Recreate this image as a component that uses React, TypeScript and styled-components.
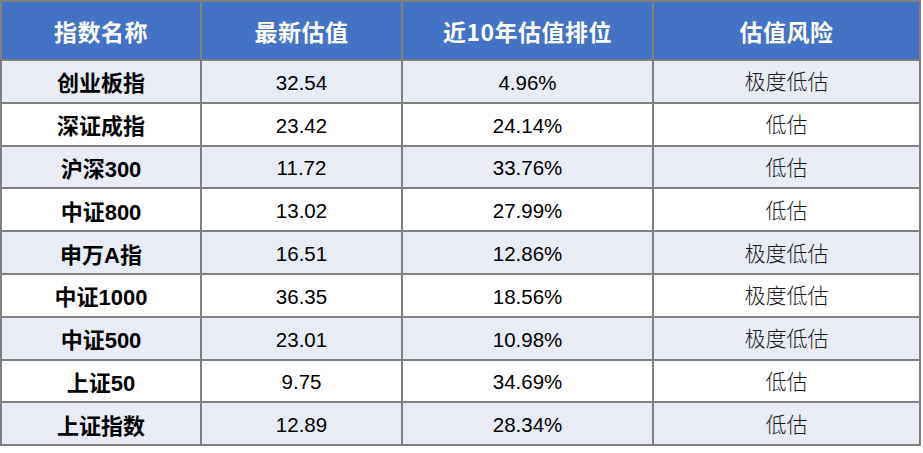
import React from 'react';
import styled, { createGlobalStyle } from 'styled-components';

interface IndexRow {
  name: string;
  value: string;
  rank: string;
  risk: string;
}

const rows: IndexRow[] = [
  { name: '创业板指', value: '32.54', rank: '4.96%', risk: '极度低估' },
  { name: '深证成指', value: '23.42', rank: '24.14%', risk: '低估' },
  { name: '沪深300', value: '11.72', rank: '33.76%', risk: '低估' },
  { name: '中证800', value: '13.02', rank: '27.99%', risk: '低估' },
  { name: '申万A指', value: '16.51', rank: '12.86%', risk: '极度低估' },
  { name: '中证1000', value: '36.35', rank: '18.56%', risk: '极度低估' },
  { name: '中证500', value: '23.01', rank: '10.98%', risk: '极度低估' },
  { name: '上证50', value: '9.75', rank: '34.69%', risk: '低估' },
  { name: '上证指数', value: '12.89', rank: '28.34%', risk: '低估' },
];

const GlobalStyle = createGlobalStyle`
  html, body {
    margin: 0;
    padding: 0;
    background: #ffffff;
  }
`;

const Table = styled.div`
  display: grid;
  grid-template-columns: 198px 199px 249px 265px;
  grid-template-rows: 57px repeat(9, 40.8px);
  gap: 2px;
  padding: 2px;
  width: fit-content;
  background: #808080;
`;

const Row = styled.div`
  display: contents;
`;

const HeaderCell = styled.div`
  display: flex;
  align-items: center;
  justify-content: center;
  background: #4472c4;
  color: #ffffff;
  font-family: 'Noto Sans CJK SC', sans-serif;
  font-weight: 700;
  font-size: 23px;
  letter-spacing: 0.5px;
`;

const Cell = styled.div<{ $alt: boolean }>`
  display: flex;
  align-items: center;
  justify-content: center;
  background: ${(p) => (p.$alt ? '#e9ebf5' : '#ffffff')};
  color: #000000;
  white-space: nowrap;
`;

const NameCell = styled(Cell)`
  font-family: 'Liberation Sans', 'Noto Sans CJK SC', sans-serif;
  font-weight: 700;
  font-size: 22px;
`;

const NumberCell = styled(Cell)`
  font-family: 'Liberation Sans', sans-serif;
  font-size: 20.5px;
  padding-top: 3px;
`;

const RiskCell = styled(Cell)`
  font-family: 'Noto Sans CJK SC', sans-serif;
  font-weight: 300;
  font-size: 21px;
  color: #1a1a1a;
  padding-bottom: 2px;
`;

const App: React.FC = () => {
  return (
    <>
      <GlobalStyle />
      <Table>
        <Row>
          <HeaderCell>指数名称</HeaderCell>
          <HeaderCell>最新估值</HeaderCell>
          <HeaderCell>近10年估值排位</HeaderCell>
          <HeaderCell>估值风险</HeaderCell>
        </Row>
        {rows.map((row, index) => {
          const alt = index % 2 === 0;
          return (
            <Row key={row.name}>
              <NameCell $alt={alt}>{row.name}</NameCell>
              <NumberCell $alt={alt}>{row.value}</NumberCell>
              <NumberCell $alt={alt}>{row.rank}</NumberCell>
              <RiskCell $alt={alt}>{row.risk}</RiskCell>
            </Row>
          );
        })}
      </Table>
    </>
  );
};

export default App;
